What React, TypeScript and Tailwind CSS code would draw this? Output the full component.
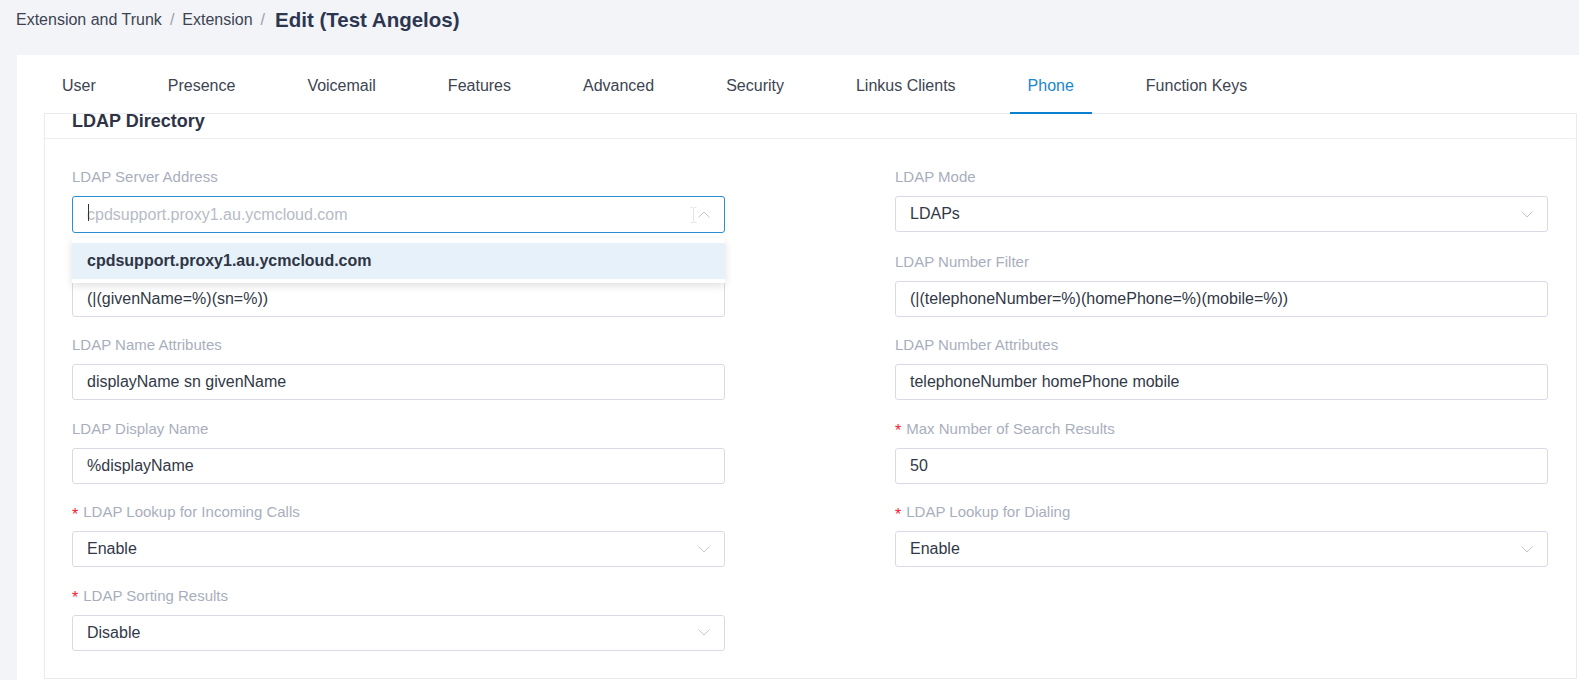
import React from "react";

const tabs = [
  "User",
  "Presence",
  "Voicemail",
  "Features",
  "Advanced",
  "Security",
  "Linkus Clients",
  "Phone",
  "Function Keys",
];

type Field = {
  label: string;
  value?: string;
  required?: boolean;
  select?: boolean;
  combo?: boolean;
  hidden?: boolean;
};

const fields: (Field | null)[] = [
  { label: "LDAP Server Address", value: "cpdsupport.proxy1.au.ycmcloud.com", combo: true },
  { label: "LDAP Mode", value: "LDAPs", select: true },
  { label: "LDAP Name Filter", value: "(|(givenName=%)(sn=%))", hidden: true },
  { label: "LDAP Number Filter", value: "(|(telephoneNumber=%)(homePhone=%)(mobile=%))" },
  { label: "LDAP Name Attributes", value: "displayName sn givenName" },
  { label: "LDAP Number Attributes", value: "telephoneNumber homePhone mobile" },
  { label: "LDAP Display Name", value: "%displayName" },
  { label: "Max Number of Search Results", value: "50", required: true },
  { label: "LDAP Lookup for Incoming Calls", value: "Enable", required: true, select: true },
  { label: "LDAP Lookup for Dialing", value: "Enable", required: true, select: true },
  { label: "LDAP Sorting Results", value: "Disable", required: true, select: true },
  null,
];

function ChevronDown() {
  return (
    <svg width="12" height="7" viewBox="0 0 12 7" fill="none">
      <path d="M0.5 0.5L6 6L11.5 0.5" stroke="#c3c6ce" strokeWidth="1" />
    </svg>
  );
}

function ChevronUp() {
  return (
    <svg width="12" height="7" viewBox="0 0 12 7" fill="none">
      <path d="M0.5 6.5L6 1L11.5 6.5" stroke="#c3c6ce" strokeWidth="1" />
    </svg>
  );
}

function IBeam() {
  return (
    <svg width="7" height="16" viewBox="0 0 7 16" fill="none">
      <path d="M0.5 0.5h2.5M4 0.5h2.5M3.5 1v14M0.5 15.5h2.5M4 15.5h2.5" stroke="#e2e4e8" strokeWidth="1" />
    </svg>
  );
}

function FormField({ f }: { f: Field }) {
  return (
    <div className="relative flex flex-col">
      <div
        className={
          "h-[22px] leading-[26px] text-[15px] text-[#a9aebd] mb-[8px] flex items-center " +
          (f.hidden ? "invisible" : "")
        }
      >
        {f.required && <span className="text-[#f5222d] text-[16px] mr-[5px] mt-[5px]">*</span>}
        {f.label}
      </div>
      {f.combo ? (
        <>
          <div className="h-[37px] border border-[#2d8dd2] rounded-[3px] pl-[14px] pr-[14px] flex items-center justify-between">
            <div className="relative text-[16px] text-[#b7bbc5]">
              <span className="absolute left-[1px] top-[1px] w-px h-[17px] bg-[#333]" />
              {f.value}
            </div>
            <div className="flex items-center gap-[1px]">
              <IBeam />
              <ChevronUp />
            </div>
          </div>
          <div className="absolute left-0 right-0 top-[72px] z-10 bg-white pt-[5px] pb-[4px] shadow-[0_3px_8px_rgba(0,0,0,0.12)]">
            <div className="h-[36px] flex items-center px-[15px] bg-[#e6f1fa] text-[16px] font-bold text-[#2f3545]">
              {f.value}
            </div>
          </div>
        </>
      ) : (
        <div className="h-[36px] border border-[#d8dbe3] rounded-[3px] pl-[14px] pr-[14px] flex items-center justify-between">
          <span className="text-[16px] text-[#323846]">{f.value}</span>
          {f.select && <ChevronDown />}
        </div>
      )}
    </div>
  );
}

export default function App() {
  return (
    <div className="h-[680px] overflow-hidden bg-[#f3f4f7] font-['Liberation_Sans',Arial,sans-serif]">
      {/* Breadcrumb */}
      <div className="h-[40px] flex items-center pl-[16px] text-[16px]">
        <span className="text-[#3c4353]">Extension and Trunk</span>
        <span className="mx-[8px] text-[#9aa0ac]">/</span>
        <span className="text-[#3c4353]">Extension</span>
        <span className="ml-[8px] mr-[10px] text-[#9aa0ac]">/</span>
        <span className="text-[20.5px] font-bold text-[#2c3650]">Edit (Test Angelos)</span>
      </div>

      {/* Card */}
      <div className="mt-[15px] ml-[17px] h-[625px] bg-white overflow-hidden">
        {/* Tabs */}
        <div className="flex pl-[27px] gap-[36px] h-[58px]">
          {tabs.map((t) => (
            <div
              key={t}
              className={
                "relative h-full flex items-center pt-[4px] px-[18px] text-[16px] " +
                (t === "Phone" ? "text-[#1b87cc]" : "text-[#3d4451]")
              }
            >
              {t}
              {t === "Phone" && <span className="absolute left-0 right-0 bottom-[-1px] h-[2px] bg-[#0b80d0]" />}
            </div>
          ))}
        </div>

        {/* Panel */}
        <div className="ml-[27px] mr-[2px] border border-[#e9ebf0]">
          <div className="h-[25px] border-b border-[#eef0f3] pl-[27px] text-[18px] leading-[15px] font-bold text-[#2e3446]">
            LDAP Directory
          </div>
          <div className="pl-[27px] pt-[27px] pb-[27px] grid grid-cols-[653px_653px] gap-x-[170px] gap-y-[17.5px]">
            {fields.map((f, i) => (f ? <FormField key={i} f={f} /> : <div key={i} />))}
          </div>
        </div>
      </div>
    </div>
  );
}
